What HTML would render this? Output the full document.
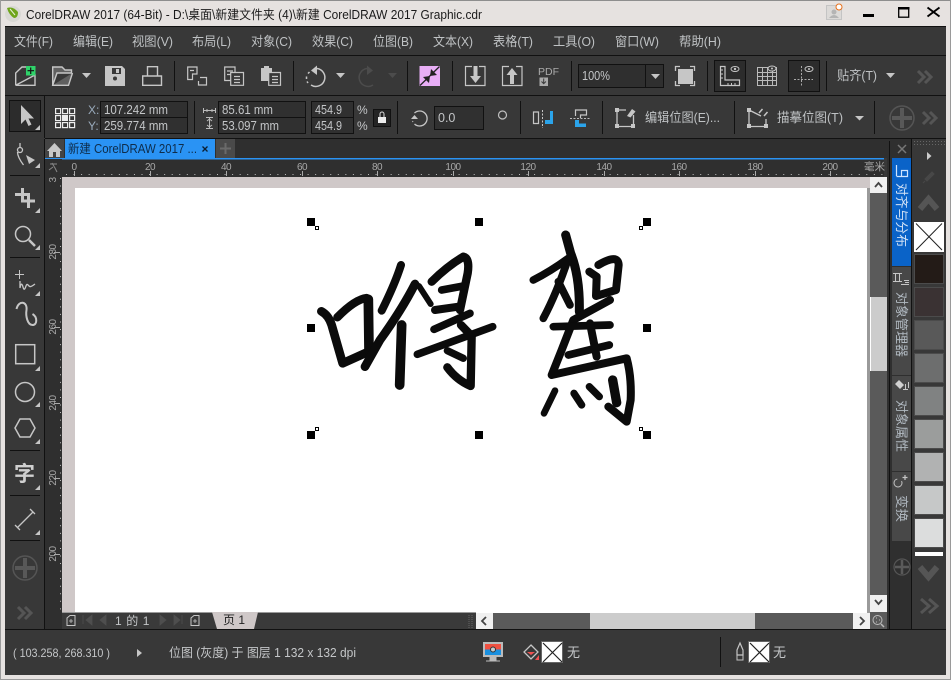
<!DOCTYPE html>
<html><head><meta charset="utf-8"><style>
html,body{margin:0;padding:0;background:#e6e2e0;width:951px;height:680px;overflow:hidden}
svg{display:block;position:absolute;left:0;top:0}
text{font-family:"Liberation Sans","Noto Sans CJK SC",sans-serif;fill:#c4c6c8;font-size:12px}
.m{font-size:13px;fill:#bfc2c4}
.r{font-size:10px;fill:#a8a8a8;letter-spacing:-.5px}
.i{fill:none;stroke:#c6c6c6}
.g{fill:none;stroke:#c6c6c6}
.d{fill:none;stroke:#555}
.ink{fill:none;stroke:#0b0b0b;stroke-linecap:round;stroke-linejoin:round}
</style></head><body>
<svg width="951" height="680" viewBox="0 0 951 680" xmlns="http://www.w3.org/2000/svg">
<rect width="951" height="680" fill="#e6e2e0"/>
<rect width="951" height="1" fill="#8e8e8e"/>
<rect width="1" height="680" fill="#9a9a9a"/>
<rect x="950" width="1" height="680" fill="#9a9a9a"/>
<rect y="679" width="951" height="1" fill="#9a9a9a"/>
<!-- title -->
<circle cx="13" cy="14" r="8" fill="#d8d8d4"/>
<path d="M7 8 Q13 6 18 12 Q18 18 14 18 Q9 15 7 8Z" fill="#6fa51c"/>
<path d="M10 9 L15 15" stroke="#e8f0d8" stroke-width="1"/>
<text x="26" y="19" textLength="456" lengthAdjust="spacingAndGlyphs" style="font-size:12.5px;fill:#1a1a1a">CorelDRAW 2017 (64-Bit) - D:\桌面\新建文件夹 (4)\新建 CorelDRAW 2017 Graphic.cdr</text>
<rect x="826.500" y="5.500" width="15" height="14" fill="#dcdad8" stroke="#c4c4c4"/>
<circle cx="834" cy="12" r="2.500" fill="#b4b4b4"/><path d="M829 18q5-6 10 0z" fill="#b4b4b4"/>
<circle cx="839" cy="7" r="3" fill="#fff" stroke="#e8701a"/>
<rect x="863" y="14" width="11" height="3" fill="#000"/>
<rect x="898.700" y="7.700" width="10" height="9.500" fill="none" stroke="#000" stroke-width="1.300"/><rect x="898" y="7" width="11.500" height="2.500" fill="#000"/>
<path d="M927.500 7.500 L939.500 16.500 M939.500 7.500 L927.500 16.500" stroke="#000" stroke-width="1.900"/>
<!-- dark body -->
<rect x="5" y="26" width="941" height="649" fill="#383838"/>
<rect x="5" y="26" width="941" height="1" fill="#111"/>
<rect x="5" y="55" width="941" height="1" fill="#111"/>
<rect x="5" y="95" width="941" height="1" fill="#111"/>
<rect x="45" y="138" width="901" height="1" fill="#111"/>
<!-- menu -->
<text class="m" x="14" y="46" textLength="39" lengthAdjust="spacingAndGlyphs">文件(F)</text>
<text class="m" x="73" y="46" textLength="40" lengthAdjust="spacingAndGlyphs">编辑(E)</text>
<text class="m" x="132" y="46" textLength="41" lengthAdjust="spacingAndGlyphs">视图(V)</text>
<text class="m" x="192" y="46" textLength="39" lengthAdjust="spacingAndGlyphs">布局(L)</text>
<text class="m" x="251" y="46" textLength="41" lengthAdjust="spacingAndGlyphs">对象(C)</text>
<text class="m" x="312" y="46" textLength="41" lengthAdjust="spacingAndGlyphs">效果(C)</text>
<text class="m" x="373" y="46" textLength="40" lengthAdjust="spacingAndGlyphs">位图(B)</text>
<text class="m" x="433" y="46" textLength="40" lengthAdjust="spacingAndGlyphs">文本(X)</text>
<text class="m" x="493" y="46" textLength="40" lengthAdjust="spacingAndGlyphs">表格(T)</text>
<text class="m" x="553" y="46" textLength="42" lengthAdjust="spacingAndGlyphs">工具(O)</text>
<text class="m" x="615" y="46" textLength="44" lengthAdjust="spacingAndGlyphs">窗口(W)</text>
<text class="m" x="679" y="46" textLength="42" lengthAdjust="spacingAndGlyphs">帮助(H)</text>
<!-- toolbar separators -->
<g fill="#111">
<rect x="174" y="61" width="1" height="30"/><rect x="293" y="61" width="1" height="30"/><rect x="407" y="61" width="1" height="30"/><rect x="452" y="61" width="1" height="30"/><rect x="571" y="61" width="1" height="30"/><rect x="707" y="61" width="1" height="30"/><rect x="826" y="61" width="1" height="30"/>
</g>
<!-- new -->
<path class="g" stroke-width="1.400" d="M15.700 85.300V73L22 67H26M35 75V85.300H15.700Z"/>
<rect x="26" y="66" width="9.500" height="9.500" fill="#2fd36a"/><path d="M30.700 67.500v6.500M27.500 70.700h6.500" stroke="#111" stroke-width="1.200"/>
<!-- open -->
<path d="M52.700 85.300V67H62L65 70H71.500V73H57L52.700 85.300H68.500L72.500 73" style="fill:#606060;stroke:#c6c6c6;stroke-width:1.400"/>
<path d="M82 73h9l-4.500 5z" fill="#c6c6c6"/>
<!-- save -->
<path d="M105 66H122L125 69V86H105Z" fill="#c6c6c6"/><rect x="112" y="68" width="9" height="6" fill="#383838"/><rect x="116" y="69" width="3" height="4" fill="#c6c6c6"/><circle cx="115" cy="78.500" r="2" fill="#383838"/>
<!-- print -->
<path class="g" stroke-width="1.400" d="M147.500 76V66.700H157.500V76M142.700 76H161.500V85.300H142.700Z"/>
<!-- import -->
<path class="i" stroke-width="1.200" d="M187.700 79.500V67H197V74H192.500V79.500ZM190 70.500H194"/>
<path class="i" stroke-width="1.200" d="M200 77.500H206.500V85H198.500V81"/>
<path class="i" stroke-width="1.200" d="M224.700 67H235V80.500H224.700ZM227 71H233M227 74.500H231"/>
<path class="i" stroke-width="1.200" style="fill:#383838" d="M230.700 72.500H243.500V85.300H230.700ZM234 76.500H240M234 79.500H240M234 82.500H240"/>
<path d="M261 68H272V81H261Z" fill="#c6c6c6"/><rect x="264" y="66" width="5" height="3" fill="#c6c6c6"/>
<path class="i" stroke-width="1.200" style="fill:#383838" d="M268.700 72.500H280.500V85.300H268.700ZM272 76.500H278M272 79.500H278M272 82.500H278"/>
<!-- undo -->
<path class="g" stroke-width="1.500" d="M317 68.500A9 9 0 1 1 311 85"/><path d="M308 83l-1-1.500M306.500 79v-2.500M308 73.500l1.500-1.500" class="g" stroke-width="1.500"/><path d="M317 65.500V75L311 70.500z" fill="#c6c6c6"/>
<path d="M336 73h9l-4.500 5z" fill="#c6c6c6"/>
<path class="d" stroke-width="1.500" style="stroke:#4c4c4c" d="M367 68.500A9 9 0 1 0 373 85"/><path d="M367 65.500V75L373 70.500z" fill="#4c4c4c"/>
<path d="M388 73h9l-4.500 5z" fill="#4c4c4c"/>
<!-- pink -->
<rect x="419.500" y="66" width="20.500" height="20" fill="#e8aef6"/>
<path d="M420 85.500 L439.500 66.500" stroke="#222" stroke-width="1.300"/><path d="M430 76L437 75L431 69ZM430 76L423 77L429 83Z" fill="#222"/>
<!-- import/export -->
<path class="i" stroke-width="1.200" d="M472 66.500H465.500V85.500H485V66.500H479"/>
<path d="M473.500 66v10h-3.500l5.500 7 5.500-7h-3.500v-10z" fill="#c6c6c6"/>
<path class="i" stroke-width="1.200" d="M509 66.500H502.500V85.500H522V66.500H516"/>
<path d="M510 84v-9h-3.500l5.500-7 5.500 7h-3.500v9z" fill="#c6c6c6"/>
<text x="538" y="75" textLength="21" style="font-size:10.500px;fill:#aaa">PDF</text>
<rect x="539.500" y="77.500" width="8.500" height="8.500" fill="#aaa"/><path d="M543.700 78.500v5M541.500 81.500l2.200 2.200 2.200-2.200" stroke="#383838" fill="none"/>
<!-- zoom -->
<rect x="578.500" y="64.500" width="85" height="23" fill="#2f2f2f" stroke="#111"/>
<rect x="645" y="64" width="1" height="24" fill="#111"/>
<text x="582" y="80" textLength="28" lengthAdjust="spacingAndGlyphs" style="font-size:12.500px">100%</text>
<path d="M651 74h9l-4.500 5z" fill="#c6c6c6"/>
<rect x="678" y="69" width="15" height="15" fill="#c6c6c6"/>
<path class="i" stroke-width="1.300" d="M675.500 71V66.500H680M690 66.500H694.500V71M694.500 81V85.500H690M680 85.500H675.500V81"/>
<!-- view buttons -->
<rect x="714.500" y="60.500" width="31" height="31" fill="#2c2c2c" stroke="#111"/>
<path class="i" stroke-width="1.200" d="M720.500 66.500H725V80H739.500V85.500H720.500Z"/><path d="M728 85v-2M731.500 85v-2M735 85v-2M721 70h2M721 74h2M721 78h2" stroke="#c6c6c6"/>
<ellipse cx="735" cy="69" rx="4" ry="2.500" fill="none" stroke="#c6c6c6"/><circle cx="735" cy="69" r="1.200" fill="#c6c6c6"/>
<path d="M757.500 67.500H776.500V85.500H757.500ZM757.500 72.500H776.500M757.500 76.500H776.500M757.500 80.500H776.500M762.500 67.500V85.500M767.500 67.500V85.500M772.500 67.500V85.500" fill="none" stroke="#bbb"/>
<ellipse cx="772" cy="68.500" rx="4" ry="2.500" fill="#383838" stroke="#c6c6c6"/><circle cx="772" cy="68.500" r="1" fill="#c6c6c6"/>
<rect x="788.500" y="60.500" width="31" height="31" fill="#2c2c2c" stroke="#111"/>
<path d="M794 79.500h19M801.500 66v20" stroke="#aaa" stroke-dasharray="2 1.500" fill="none"/>
<ellipse cx="809" cy="69" rx="4" ry="2.500" fill="none" stroke="#c6c6c6"/><circle cx="809" cy="69" r="1" fill="#c6c6c6"/>
<text class="m" x="837" y="80" textLength="40" lengthAdjust="spacingAndGlyphs">贴齐(T)</text>
<path d="M886 73h9l-4.500 5z" fill="#c6c6c6"/>
<path class="d" stroke-width="3" d="M918 71l6 6-6 6M925 71l6 6-6 6"/>
<!-- property bar -->
<rect x="44" y="96" width="1" height="42" fill="#111"/>
<g fill="#111"><rect x="194" y="101" width="1" height="33"/><rect x="397" y="101" width="1" height="33"/><rect x="520" y="101" width="1" height="33"/><rect x="602" y="101" width="1" height="33"/><rect x="734" y="101" width="1" height="33"/><rect x="874" y="101" width="1" height="33"/></g>
<rect x="9.500" y="100.500" width="31" height="31" fill="#2c2c2c" stroke="#111"/>
<path d="M21 105v19l4.500-4.500 3 6.500 3-1.500-3-6h5.500z" fill="#c6c6c6"/>
<path d="M40 125v5h-5z" fill="#c6c6c6"/>
<g fill="none" stroke="#eee" stroke-width="1.200"><rect x="55.600" y="108.600" width="5" height="5"/><rect x="62.600" y="108.600" width="5" height="5"/><rect x="69.600" y="108.600" width="5" height="5"/><rect x="55.600" y="115.600" width="5" height="5"/><rect x="69.600" y="115.600" width="5" height="5"/><rect x="55.600" y="122.600" width="5" height="5"/><rect x="62.600" y="122.600" width="5" height="5"/><rect x="69.600" y="122.600" width="5" height="5"/></g>
<rect x="62" y="115" width="6" height="6" fill="#eee"/>
<text x="88" y="114" style="font-size:12px;fill:#9ab">X:</text><text x="88" y="130" style="font-size:12px;fill:#9ab">Y:</text>
<path d="M100.500 101.500H187.500V133.500H100.500ZM100.500 117.500H187.500" fill="#303030" stroke="#111"/>
<text x="104" y="114" textLength="64" lengthAdjust="spacingAndGlyphs" style="font-size:12.500px">107.242 mm</text><text x="104" y="130" textLength="64" lengthAdjust="spacingAndGlyphs" style="font-size:12.500px">259.774 mm</text>
<path d="M203.500 110.500h12M203.500 108v5M215.500 108v5M207 109v3M212 109v3" stroke="#bbb" fill="none"/>
<path d="M209.500 117v12M206 117.500h7M206 128.500h7M207 121l2.500-2 2.500 2M207 125l2.500 2 2.500-2" stroke="#bbb" fill="none"/>
<path d="M218.500 101.500H305.500V133.500H218.500ZM218.500 117.500H305.500" fill="#303030" stroke="#111"/>
<text x="222" y="114" textLength="51" lengthAdjust="spacingAndGlyphs" style="font-size:12.500px">85.61 mm</text><text x="222" y="130" textLength="57" lengthAdjust="spacingAndGlyphs" style="font-size:12.500px">53.097 mm</text>
<path d="M311.500 101.500H353.500V133.500H311.500ZM311.500 117.500H353.500" fill="#303030" stroke="#111"/>
<text x="315" y="114" textLength="27" lengthAdjust="spacingAndGlyphs" style="font-size:12.500px">454.9</text><text x="315" y="130" textLength="27" lengthAdjust="spacingAndGlyphs" style="font-size:12.500px">454.9</text>
<text x="357" y="114" style="font-size:12px">%</text><text x="357" y="130" style="font-size:12px">%</text>
<rect x="373.500" y="109.500" width="17" height="17" fill="#252525" stroke="#111"/>
<rect x="378" y="117" width="8" height="6" fill="#eee"/><path d="M380 117v-3a2 2 0 0 1 4 0v3" stroke="#ddd" fill="none"/>
<path class="g" stroke-width="1.300" d="M414.500 113A7.500 7.500 0 1 1 414.500 124"/><path d="M411 119h7l-3.500-4z" fill="#c6c6c6"/><path d="M412.500 121l.5 1" stroke="#c6c6c6"/>
<rect x="434.500" y="106.500" width="49" height="23" fill="#303030" stroke="#111"/>
<text x="438" y="122" style="font-size:12.500px">0.0</text>
<circle cx="502.500" cy="115" r="4" fill="none" stroke="#c0c0c0" stroke-width="1.200"/>
<path d="M533.500 112h5v11.500h-5zM538.500 118" fill="none" stroke="#c6c6c6" stroke-width="1.200"/><path d="M542.500 110v18" stroke="#c6c6c6" stroke-dasharray="2 1.500"/><path d="M545 124h8v-13h-3v9h-5z" fill="#2ba4ea"/>
<path class="i" stroke-width="1.200" d="M575.500 116v-6h11v5h-6v3"/><path d="M570 118.500h20" stroke="#bbb" stroke-dasharray="2 1.500"/><path d="M575 120h4v3.500h7v3.500h-11z" fill="#2ba4ea"/>
<path class="i" stroke-width="1.300" d="M617 111V126.500H633.500V115M617 110H626"/><g fill="#c6c6c6"><rect x="615" y="108" width="4" height="4"/><rect x="615" y="124" width="4" height="4"/><rect x="631" y="124" width="4" height="4"/></g>
<path d="M627 116l5-7 3.500 2.500-5 6z" fill="#c6c6c6"/>
<text class="m" x="645" y="122" textLength="75" lengthAdjust="spacingAndGlyphs">编辑位图(E)...</text>
<path class="i" stroke-width="1.300" d="M749 110L761 116M749 110V126.500H766V119"/><g fill="#c6c6c6"><rect x="747" y="108" width="4" height="4"/><rect x="747" y="124" width="4" height="4"/><rect x="764" y="124" width="4" height="4"/></g><path d="M759 113l3.500-4M764 116l3.500-4" stroke="#c6c6c6" stroke-width="1.500"/>
<text class="m" x="777" y="122" textLength="66" lengthAdjust="spacingAndGlyphs">描摹位图(T)</text>
<path d="M855 116h9l-4.500 4.500z" fill="#c6c6c6"/>
<circle cx="902" cy="118" r="12" fill="none" stroke="#555" stroke-width="1.500"/><path d="M902 108v20M892 118h20" stroke="#585858" stroke-width="4"/>
<path class="d" stroke-width="3" d="M923 112l6 6-6 6M930 112l6 6-6 6"/>
<!-- tab bar -->
<rect x="45" y="139" width="845" height="19" fill="#2f2f2f"/>
<rect x="45" y="139" width="19" height="19" fill="#444"/>
<path d="M47 151l7.500-8 7.500 8h-2v6h-11v-6z" fill="#c8c8c8"/><rect x="53" y="152" width="3" height="5" fill="#444"/>
<rect x="65" y="139" width="150" height="19" fill="#2a93f4"/>
<text x="68" y="153" textLength="129" lengthAdjust="spacingAndGlyphs" style="font-size:12.500px;fill:#0e2c4a">新建 CorelDRAW 2017 ...</text>
<path d="M202.500 146.500l5 5M207.500 146.500l-5 5" stroke="#0b1f33" stroke-width="1.300"/>
<rect x="216" y="139" width="19" height="19" fill="#4a4a4a"/>
<path d="M225.500 143v11M220 148.500h11" stroke="#6a6a6a" stroke-width="2"/>
<rect x="45" y="158" width="839" height="1.500" fill="#2a93f4"/>
<!-- rulers -->
<rect x="45" y="159.500" width="839" height="17.500" fill="#2f2f2f"/>
<rect x="45" y="159" width="17" height="470" fill="#2f2f2f"/>
<path d="M50 164h7M52 163l3 5 2 4M49 170l4-3" stroke="#888" fill="none"/>
<g text-anchor="middle">
<text class="r" x="74" y="170">0</text><text class="r" x="150" y="170">20</text><text class="r" x="226" y="170">40</text><text class="r" x="302" y="170">60</text><text class="r" x="377" y="170">80</text><text class="r" x="453" y="170">100</text><text class="r" x="528" y="170">120</text><text class="r" x="604" y="170">140</text><text class="r" x="679" y="170">160</text><text class="r" x="755" y="170">180</text><text class="r" x="830" y="170">200</text>
</g>
<text class="r" x="864" y="170" style="letter-spacing:0;font-size:10.500px">毫米</text>
<path d="M74.500 171v5M150.500 171v5M226.500 171v5M302.500 171v5M377.500 171v5M453.500 171v5M528.500 171v5M604.500 171v5M679.500 171v5M755.500 171v5M830.500 171v5" stroke="#aaa"/>
<path d="M66 174.500H884" stroke="#bbb" stroke-dasharray="1 6.550"/>
<g text-anchor="middle">
<text class="r" transform="rotate(-90 56 252)" x="56" y="252">280</text>
<text class="r" transform="rotate(-90 56 327)" x="56" y="327">260</text>
<text class="r" transform="rotate(-90 56 403)" x="56" y="403">240</text>
<text class="r" transform="rotate(-90 56 478)" x="56" y="478">220</text>
<text class="r" transform="rotate(-90 56 554)" x="56" y="554">200</text>
<text class="r" transform="rotate(-90 56 180)" x="56" y="180">3</text>
</g>
<path d="M54 252.500h6M54 327.500h6M54 403.500h6M54 478.500h6M54 554.500h6" stroke="#aaa"/>
<path d="M60.500 178V610" stroke="#bbb" stroke-dasharray="1 6.550"/>
<!-- canvas -->
<rect x="62" y="177" width="808" height="436" fill="#cfc8c8"/>
<rect x="75" y="188" width="792" height="425" fill="#fff"/>
<rect x="867" y="188" width="3" height="425" fill="#9a9a9a"/>
<!-- handwriting -->
<g class="ink" transform="translate(300,210) scale(.33333)">
<path d="M64 304Q85 315 95 345L128 460L212 422" stroke-width="26"/>
<path d="M205 268L207 420" stroke-width="29"/>
<path d="M200 264Q165 268 112 322" stroke-width="25"/>
<path d="M303 165Q285 222 245 302" stroke-width="24"/>
<path d="M345 222Q305 300 240 390L195 470" stroke-width="26"/>
<path d="M305 345L299 525" stroke-width="29"/>
<path d="M357 228L392 282" stroke-width="18"/>
<path d="M395 215Q440 170 490 140Q510 145 503 190L480 300" stroke-width="25"/>
<path d="M425 240L490 228" stroke-width="23"/>
<path d="M405 300L475 290" stroke-width="24"/>
<path d="M402 358L510 310" stroke-width="23"/>
<path d="M352 433L578 350" stroke-width="23"/>
<path d="M483 345L515 378L512 528Q470 510 442 472" stroke-width="25"/>
<path d="M442 422L490 445" stroke-width="22"/>
</g>
<g class="ink" transform="translate(500,210) scale(.33333)">
<path d="M197 75L212 130Q240 200 238 305" stroke-width="27"/>
<path d="M100 210Q150 185 205 145Q170 250 130 325" stroke-width="23"/>
<path d="M175 215L210 285" stroke-width="23"/>
<path d="M268 185L290 200L288 258L348 240L356 165Q355 130 295 165" stroke-width="24"/>
<path d="M330 270L220 330L185 420L155 495L380 445Q395 500 392 570L380 635L325 590" stroke-width="24"/>
<path d="M160 350L330 345" stroke-width="23"/>
<path d="M205 435L328 405" stroke-width="23"/>
<path d="M270 340L290 440" stroke-width="24"/>
<path d="M338 510L350 578" stroke-width="28"/>
<path d="M165 542L132 610" stroke-width="20"/>
<path d="M222 550L245 585" stroke-width="22"/>
<path d="M268 530L298 560" stroke-width="22"/>
</g>
<!-- handles -->
<g fill="#000"><rect x="307" y="218" width="8" height="8"/><rect x="475" y="218" width="8" height="8"/><rect x="643" y="218" width="8" height="8"/><rect x="307" y="324" width="8" height="8"/><rect x="643" y="324" width="8" height="8"/><rect x="307" y="431" width="8" height="8"/><rect x="475" y="431" width="8" height="8"/><rect x="643" y="431" width="8" height="8"/></g>
<g fill="#fff" stroke="#000"><rect x="315.500" y="226.500" width="3" height="3"/><rect x="639.500" y="226.500" width="3" height="3"/><rect x="315.500" y="427.500" width="3" height="3"/><rect x="639.500" y="427.500" width="3" height="3"/></g>
<!-- v scroll -->
<rect x="870" y="177" width="17" height="436" fill="#5a5a5a"/>
<rect x="870" y="177" width="17" height="16" fill="#f0f0f0"/><path d="M875 187l3.500-4 3.500 4" stroke="#444" stroke-width="1.800" fill="none"/>
<rect x="870" y="297" width="17" height="74" fill="#ccc"/><rect x="870" y="297" width="1" height="74" fill="#fff"/>
<rect x="870" y="595" width="17" height="17" fill="#f0f0f0"/><path d="M875 600l3.500 4 3.500-4" stroke="#444" stroke-width="1.800" fill="none"/>
<!-- page nav -->
<rect x="62" y="613" width="414" height="16" fill="#3a3a3a"/>
<rect x="62" y="612" width="414" height="1" fill="#9a9a9a"/>
<path class="i" stroke-width="1" d="M67 625.500V618L70 615.500H75V625.500Z"/><path d="M69 621h4M71 619v4" stroke="#c6c6c6" stroke-width=".8"/>
<path d="M83 615v9M92 615l-6 5 6 5zM106 615l-6 5 6 5z" fill="#4e4e4e" stroke="#4e4e4e" stroke-width=".8"/>
<text x="115" y="625" style="font-size:12px;letter-spacing:.6px">1 的 1</text>
<path d="M160 615l6 5-6 5zM174 615l6 5-6 5zM182 615v9" fill="#4e4e4e" stroke="#4e4e4e" stroke-width=".8"/>
<path class="i" stroke-width="1" d="M191 625.500V618L194 615.500H199V625.500Z"/><path d="M193 621h4M195 619v4" stroke="#c6c6c6" stroke-width=".8"/>
<path d="M212 612H258L254 629H217Z" fill="#cfc8c8"/>
<text x="223" y="624" style="font-size:12px;fill:#222">页 1</text>
<path d="M469 615v13M472 615v13" stroke="#666" stroke-dasharray="1 1"/>
<!-- h scroll -->
<rect x="476" y="613" width="393" height="16" fill="#5a5a5a"/>
<rect x="476" y="613" width="17" height="16" fill="#f0f0f0"/><path d="M486 617l-4 4 4 4" stroke="#444" stroke-width="1.800" fill="none"/>
<rect x="590" y="613" width="165" height="16" fill="#ccc"/>
<rect x="853" y="613" width="17" height="16" fill="#f0f0f0"/><path d="M860 617l4 4-4 4" stroke="#444" stroke-width="1.800" fill="none"/>
<rect x="870" y="613" width="17" height="16" fill="#5a5a5a"/>
<circle cx="877.500" cy="620" r="4.500" fill="none" stroke="#bbb"/><path d="M881 624l3 3" stroke="#bbb" stroke-width="1.500"/><path d="M876 618h1M879 620h1M876 622h1" stroke="#bbb"/>
<!-- left toolbox -->
<rect x="44" y="139" width="1" height="490" fill="#111"/>
<path class="i" stroke-width="1.300" d="M20 143v4M17.500 152c0 4 3 9 6 13"/><circle cx="20" cy="150" r="2.500" fill="none" stroke="#c6c6c6" stroke-width="1.300"/><path d="M26 155l9 5-6 4z" fill="#c6c6c6"/>
<path d="M40 163v5h-5z" fill="#c6c6c6"/>
<rect x="10" y="175" width="30" height="1" fill="#111"/>
<path d="M22.500 188v13H35M15 194.500H28.500V208" stroke="#c6c6c6" stroke-width="3" fill="none"/>
<path d="M40 208v5h-5z" fill="#c6c6c6"/>
<circle cx="23" cy="234" r="7.500" fill="none" stroke="#c6c6c6" stroke-width="1.500"/><path d="M29 240l6 6" stroke="#c6c6c6" stroke-width="2.500"/>
<path d="M40 245v5h-5z" fill="#c6c6c6"/>
<rect x="10" y="257" width="30" height="1" fill="#111"/>
<path d="M19.500 270v9M15 274.500h9" stroke="#c6c6c6" fill="none"/>
<path class="i" stroke-width="1.300" d="M20 281v7c1-5 2-5 3-1s2 2 3-1 2-1 3 0 2 1 6-2"/>
<path d="M40 291v5h-5z" fill="#c6c6c6"/>
<path class="g" stroke-width="2" d="M16.500 309c2-9 11-8 10 1-1 6 1 15 6 15s5-8 0-11"/>
<rect x="15.700" y="344.700" width="19" height="19" fill="none" stroke="#c6c6c6" stroke-width="1.500"/>
<path d="M40 366v5h-5z" fill="#c6c6c6"/>
<circle cx="25" cy="392" r="9.500" fill="none" stroke="#c6c6c6" stroke-width="1.500"/>
<path d="M40 402v5h-5z" fill="#c6c6c6"/>
<path d="M20 419H30L35 428L30 437H20L15 428Z" fill="none" stroke="#c6c6c6" stroke-width="1.500"/>
<path d="M40 439v5h-5z" fill="#c6c6c6"/>
<rect x="10" y="450" width="30" height="1" fill="#111"/>
<text x="14" y="481" style="font-size:21px;font-weight:bold;fill:#d0d0d0">字</text>
<path d="M40 485v5h-5z" fill="#c6c6c6"/>
<rect x="10" y="495" width="30" height="1" fill="#111"/>
<path d="M17 528L33 512M15 525l5 5M30 509l5 5" stroke="#c6c6c6" stroke-width="1.300" fill="none"/>
<path d="M40 530v5h-5z" fill="#c6c6c6"/>
<rect x="10" y="540" width="30" height="1" fill="#111"/>
<circle cx="25" cy="568" r="12" fill="none" stroke="#555" stroke-width="1.500"/><path d="M25 558v20M15 568h20" stroke="#585858" stroke-width="4"/>
<path class="d" stroke-width="3" d="M18 607l6 6-6 6M25 607l6 6-6 6"/>
<!-- docker -->
<rect x="887" y="139" width="25" height="490" fill="#2f2f2f"/>
<rect x="889" y="141" width="1" height="488" fill="#111"/>
<rect x="911" y="139" width="1" height="490" fill="#111"/>
<path d="M898 145l8 8M906 145l-8 8" stroke="#777" stroke-width="1.500"/>
<rect x="892" y="158" width="19" height="108" fill="#0a63c8"/>
<rect x="892" y="267" width="19" height="108" fill="#484848"/>
<rect x="892" y="376" width="19" height="95" fill="#484848"/>
<rect x="892" y="472" width="19" height="69" fill="#484848"/>
<path d="M896.500 165v11M896.500 176.500h11v-6h-6v6" fill="none" stroke="#cfe4ff" stroke-width="1.200"/>
<text transform="rotate(90 897 183)" x="897" y="183" style="font-size:13px;fill:#cfe0f5" textLength="64" lengthAdjust="spacingAndGlyphs">对齐与分布</text>
<path d="M895.500 273v8M899.500 273v8M893 273.500h9M893 281.500h9" fill="none" stroke="#c6c6c6"/><path d="M904 280.500h5M905 282.500h4M901 284.500h8" stroke="#c6c6c6"/>
<text transform="rotate(90 897 292)" x="897" y="292" style="font-size:13px;fill:#b0b8c0" textLength="65" lengthAdjust="spacingAndGlyphs">对象管理器</text>
<path d="M895 384l4-4 5 5-4 4z" fill="#d0d0d0"/><path d="M903 389.500h5M905.500 384v6M908.500 382v6" stroke="#c6c6c6"/>
<text transform="rotate(90 897 400)" x="897" y="400" style="font-size:13px;fill:#b0b8c0" textLength="52" lengthAdjust="spacingAndGlyphs">对象属性</text>
<circle cx="898" cy="483" r="4" fill="none" stroke="#c6c6c6" stroke-dasharray="18 5"/><path d="M905 475v5M902.500 477.500h5" stroke="#c6c6c6" stroke-width="1.200"/>
<text transform="rotate(90 897 495)" x="897" y="495" style="font-size:13px;fill:#b0b8c0" textLength="27" lengthAdjust="spacingAndGlyphs">变换</text>
<circle cx="902" cy="567" r="8" fill="none" stroke="#555" stroke-width="1.200"/><path d="M902 560v14M895 567h14" stroke="#5a5a5a" stroke-width="2.500"/>
<!-- palette -->
<path d="M914 141.500H945" stroke="#666" stroke-dasharray="1 2"/><path d="M914 144.500H945" stroke="#666" stroke-dasharray="1 2"/>
<path d="M927 152l4.500 4-4.500 4z" fill="#ccc"/>
<path d="M925 179l7-7 2 2-7 7zM923 183l2-2" fill="#484848" stroke="#484848"/>
<path d="M920 209L928.500 199L937 209" stroke="#555" stroke-width="6" fill="none"/>
<rect x="914" y="222" width="30" height="30" fill="#fff"/><path d="M916 223.500L942 250M942 223.500L916 250" stroke="#222"/>
<g stroke="#4b4b4b">
<rect x="914.500" y="254.500" width="29" height="29" fill="#231b17"/>
<rect x="914.500" y="287.500" width="29" height="29" fill="#3a3233"/>
<rect x="914.500" y="320.500" width="29" height="29" fill="#595959"/>
<rect x="914.500" y="353.500" width="29" height="29" fill="#6d6e6e"/>
<rect x="914.500" y="386.500" width="29" height="29" fill="#808282"/>
<rect x="914.500" y="419.500" width="29" height="29" fill="#9b9d9c"/>
<rect x="914.500" y="452.500" width="29" height="29" fill="#b1b2b2"/>
<rect x="914.500" y="485.500" width="29" height="29" fill="#c6c8c8"/>
<rect x="914.500" y="518.500" width="29" height="29" fill="#dcdddd"/>
</g>
<rect x="915" y="552" width="28" height="4" fill="#fff"/>
<path d="M920 567L928.500 577L937 567" stroke="#555" stroke-width="6" fill="none"/>
<path class="d" stroke-width="3" d="M921 599l8 7-8 7M929 599l8 7-8 7"/>
<!-- status -->
<rect x="5" y="629" width="941" height="1" fill="#111"/>
<text x="13" y="657" textLength="97" lengthAdjust="spacingAndGlyphs" style="font-size:12px">( 103.258, 268.310 )</text>
<path d="M137 649l5 4-5 4z" fill="#c6c6c6"/>
<text x="169" y="657" textLength="187" lengthAdjust="spacingAndGlyphs" style="font-size:12.500px">位图 (灰度) 于 图层 1 132 x 132 dpi</text>
<rect x="483" y="642" width="20" height="15" fill="#bbb"/>
<rect x="485" y="644" width="16" height="5.500" fill="#f05040"/><rect x="485" y="649.500" width="16" height="5.500" fill="#1a90e0"/>
<circle cx="493" cy="649.500" r="2.500" fill="#ccc" stroke="#333"/>
<path d="M490 657h6v3h-6zM486 661h14" stroke="#bbb" fill="#bbb"/>
<path d="M531 645l7 7-7 7-7-7z" fill="none" stroke="#c6c6c6" stroke-width="1.300"/><path d="M527 652h8l-4 3z" fill="#f05050"/><path d="M539 655v5h-4z" fill="#f05050"/>
<rect x="541.500" y="641.500" width="21" height="21" fill="#fff" stroke="#666"/><path d="M543 643L562 662M562 643L543 662" stroke="#222" stroke-width="1.200"/>
<text x="567" y="657" style="font-size:13px">无</text>
<rect x="720" y="637" width="1" height="30" fill="#111"/>
<path d="M740 643l3 7v5h-6v-5z" fill="none" stroke="#c6c6c6" stroke-width="1.200"/><rect x="737" y="655" width="6" height="5" fill="none" stroke="#c6c6c6"/>
<rect x="748.500" y="641.500" width="21" height="21" fill="#fff" stroke="#666"/><path d="M750 643L769 662M769 643L750 662" stroke="#222" stroke-width="1.200"/>
<text x="773" y="657" style="font-size:13px">无</text>
</svg>
</body></html>
